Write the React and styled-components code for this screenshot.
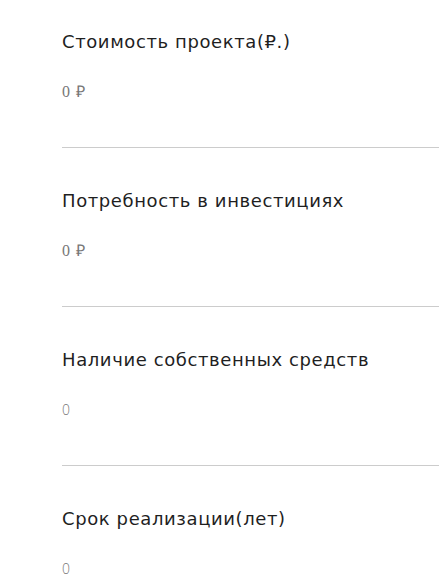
import React from "react";
import styled, { createGlobalStyle } from "styled-components";

const GlobalStyle = createGlobalStyle`
  html, body {
    margin: 0;
    padding: 0;
    background: #ffffff;
  }
`;

const items = [
  { title: "Стоимость проекта(₽.)", value: "0 ₽", money: true },
  { title: "Потребность в инвестициях", value: "0 ₽", money: true },
  { title: "Наличие собственных средств", value: "0" },
  { title: "Срок реализации(лет)", value: "0" },
];

const App = () => {
  return (
    <>
      <GlobalStyle />
      <List>
        {items.map((item, i) => (
          <Section key={i} last={i === items.length - 1}>
            <Title>{item.title}</Title>
            <Value money={item.money}>{item.value}</Value>
          </Section>
        ))}
      </List>
    </>
  );
};

export default App;

// STYLED CSS

const List = styled.div`
  display: flex;
  flex-direction: column;
  padding-left: 62px;
`;

const Section = styled.div`
  display: flex;
  flex-direction: column;
  gap: 28px;
  padding: 41px 0 ${(p) => (p.last ? "0" : "45px")};
  border-bottom: ${(p) => (p.last ? "none" : "1px solid #cccccc")};
  &:first-child {
    padding-top: 30px;
  }
`;

const Title = styled.div`
  font-family: "DejaVu Sans", "Liberation Sans", sans-serif;
  font-size: 18px;
  letter-spacing: 0.6px;
  line-height: 24px;
  color: #1f1f1f;
`;

const Value = styled.div`
  font-family: ${(p) =>
    p.money ? '"Liberation Serif", serif' : '"Open Sans", sans-serif'};
  font-weight: 300;
  font-size: ${(p) => (p.money ? "16px" : "14px")};
  letter-spacing: ${(p) => (p.money ? "1px" : "0")};
  line-height: 20px;
  color: #777777;
`;
